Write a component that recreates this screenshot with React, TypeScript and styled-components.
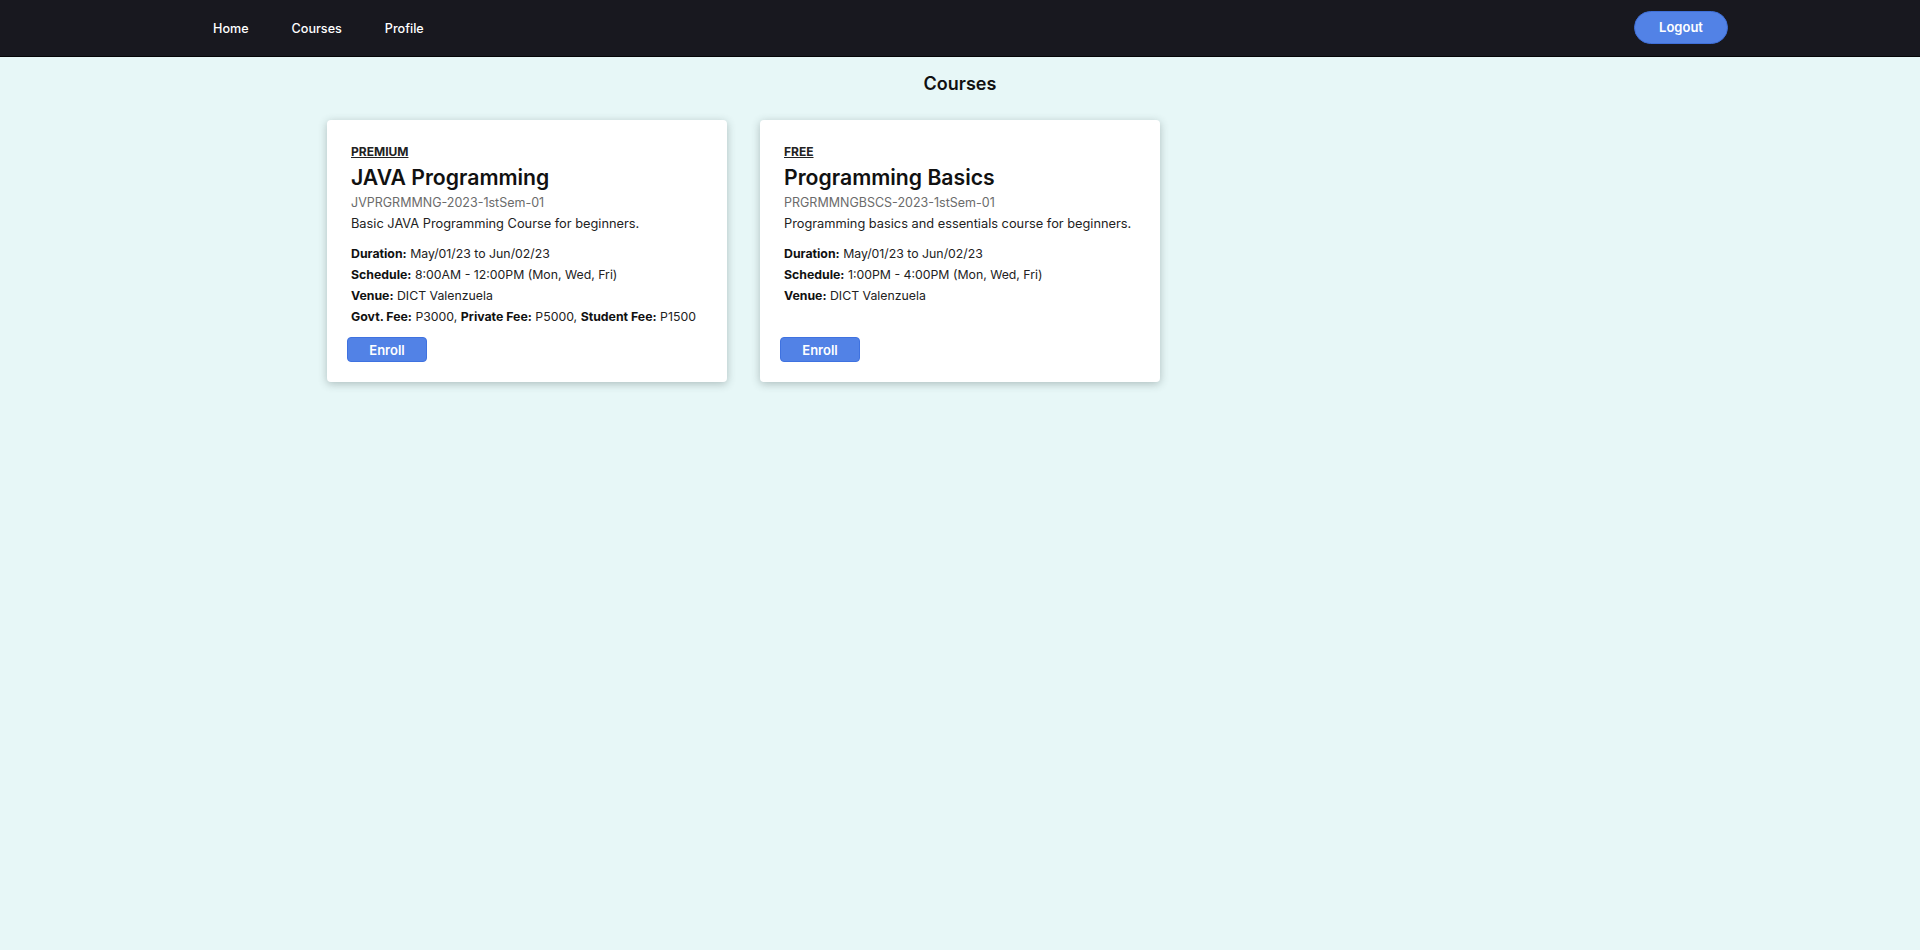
import React from "react";
import styled, { createGlobalStyle } from "styled-components";

const GlobalStyle = createGlobalStyle`
  html, body {
    margin: 0;
    padding: 0;
    background: #e7f7f7;
    font-family: Inter, "Noto Sans", sans-serif;
    color: #1a1a1a;
  }
  * { box-sizing: border-box; }
`;

const NavBar = styled.nav`
  height: 57px;
  background: #18181f;
  border-bottom: 1px solid #050507;
  display: flex;
  align-items: center;
  justify-content: space-between;
  padding: 0 192px 0 213px;
`;

const NavLinks = styled.div`
  display: flex;
  align-items: center;
  gap: 43px;
  padding-top: 2px;
`;

const NavLink = styled.a`
  color: #ffffff;
  font-size: 12.6px;
  font-weight: 500;
  text-decoration: none;
  line-height: 20px;
  cursor: pointer;
`;

const LogoutButton = styled.button`
  width: 94px;
  height: 33px;
  border-radius: 17px;
  border: 1px solid #3f6fd8;
  background: #5282e6;
  color: #fff;
  font-family: inherit;
  font-size: 13px;
  font-weight: 600;
  cursor: pointer;
  margin-top: -2px;
`;

const Main = styled.main`
  padding: 15px 0 40px;
`;

const PageTitle = styled.h1`
  margin: 0 0 24px;
  text-align: center;
  font-size: 18px;
  line-height: 24px;
  font-weight: 600;
  color: #111;
`;

const CardGrid = styled.div`
  width: 1266px;
  margin: 0 auto;
  display: grid;
  grid-template-columns: repeat(3, minmax(0, 1fr));
  column-gap: 33px;
  align-items: stretch;
`;

const Card = styled.div`
  background: #fff;
  border-radius: 4px;
  box-shadow: 0 2px 8px rgba(40, 60, 60, 0.3);
  display: flex;
  flex-direction: column;
  min-width: 0;
`;

const CardBody = styled.div`
  flex: 1;
  padding: 24px 24px 10px;
  white-space: nowrap;
`;

const Tier = styled.div`
  font-size: 12px;
  line-height: 16px;
  font-weight: 700;
  text-decoration: underline;
  color: #222;
`;

const CourseTitle = styled.h2`
  margin: 4px 0 0;
  font-size: 21.2px;
  line-height: 26px;
  font-weight: 600;
  color: #111;
`;

const CourseCode = styled.div`
  margin-top: 3px;
  font-size: 12.5px;
  line-height: 20px;
  color: #6b6b6b;
`;

const Description = styled.p`
  margin: 0;
  font-size: 12.8px;
  line-height: 22px;
  color: #222;
`;

const Details = styled.div`
  margin-top: 8px;
`;

const DetailLine = styled.div`
  font-size: 12.3px;
  line-height: 21px;
  color: #222;
  b {
    font-weight: 700;
    color: #111;
  }
`;

const CardFooter = styled.div`
  padding: 0 20px 20px;
`;

const EnrollButton = styled.button`
  width: 80px;
  height: 25px;
  border-radius: 4px;
  border: 1px solid #3f72e0;
  background: #5282e6;
  color: #fff;
  font-family: inherit;
  font-size: 13px;
  font-weight: 600;
  cursor: pointer;
  padding: 0;
`;

type Course = {
  tier: string;
  title: string;
  code: string;
  description: string;
  duration: string;
  schedule: string;
  venue: string;
  fees?: { label: string; value: string }[];
};

const courses: Course[] = [
  {
    tier: "PREMIUM",
    title: "JAVA Programming",
    code: "JVPRGRMMNG-2023-1stSem-01",
    description: "Basic JAVA Programming Course for beginners.",
    duration: "May/01/23 to Jun/02/23",
    schedule: "8:00AM - 12:00PM (Mon, Wed, Fri)",
    venue: "DICT Valenzuela",
    fees: [
      { label: "Govt. Fee:", value: "P3000" },
      { label: "Private Fee:", value: "P5000" },
      { label: "Student Fee:", value: "P1500" },
    ],
  },
  {
    tier: "FREE",
    title: "Programming Basics",
    code: "PRGRMMNGBSCS-2023-1stSem-01",
    description: "Programming basics and essentials course for beginners.",
    duration: "May/01/23 to Jun/02/23",
    schedule: "1:00PM - 4:00PM (Mon, Wed, Fri)",
    venue: "DICT Valenzuela",
  },
];

export default function App() {
  return (
    <>
      <GlobalStyle />
      <NavBar>
        <NavLinks>
          <NavLink>Home</NavLink>
          <NavLink>Courses</NavLink>
          <NavLink>Profile</NavLink>
        </NavLinks>
        <LogoutButton>Logout</LogoutButton>
      </NavBar>
      <Main>
        <PageTitle>Courses</PageTitle>
        <CardGrid>
          {courses.map((c) => (
            <Card key={c.code}>
              <CardBody>
                <Tier>{c.tier}</Tier>
                <CourseTitle>{c.title}</CourseTitle>
                <CourseCode>{c.code}</CourseCode>
                <Description>{c.description}</Description>
                <Details>
                  <DetailLine>
                    <b>Duration:</b> {c.duration}
                  </DetailLine>
                  <DetailLine>
                    <b>Schedule:</b> {c.schedule}
                  </DetailLine>
                  <DetailLine>
                    <b>Venue:</b> {c.venue}
                  </DetailLine>
                  {c.fees && (
                    <DetailLine>
                      {c.fees.map((f, i) => (
                        <React.Fragment key={f.label}>
                          <b>{f.label}</b> {f.value}
                          {i < c.fees!.length - 1 ? ", " : ""}
                        </React.Fragment>
                      ))}
                    </DetailLine>
                  )}
                </Details>
              </CardBody>
              <CardFooter>
                <EnrollButton>Enroll</EnrollButton>
              </CardFooter>
            </Card>
          ))}
        </CardGrid>
      </Main>
    </>
  );
}
